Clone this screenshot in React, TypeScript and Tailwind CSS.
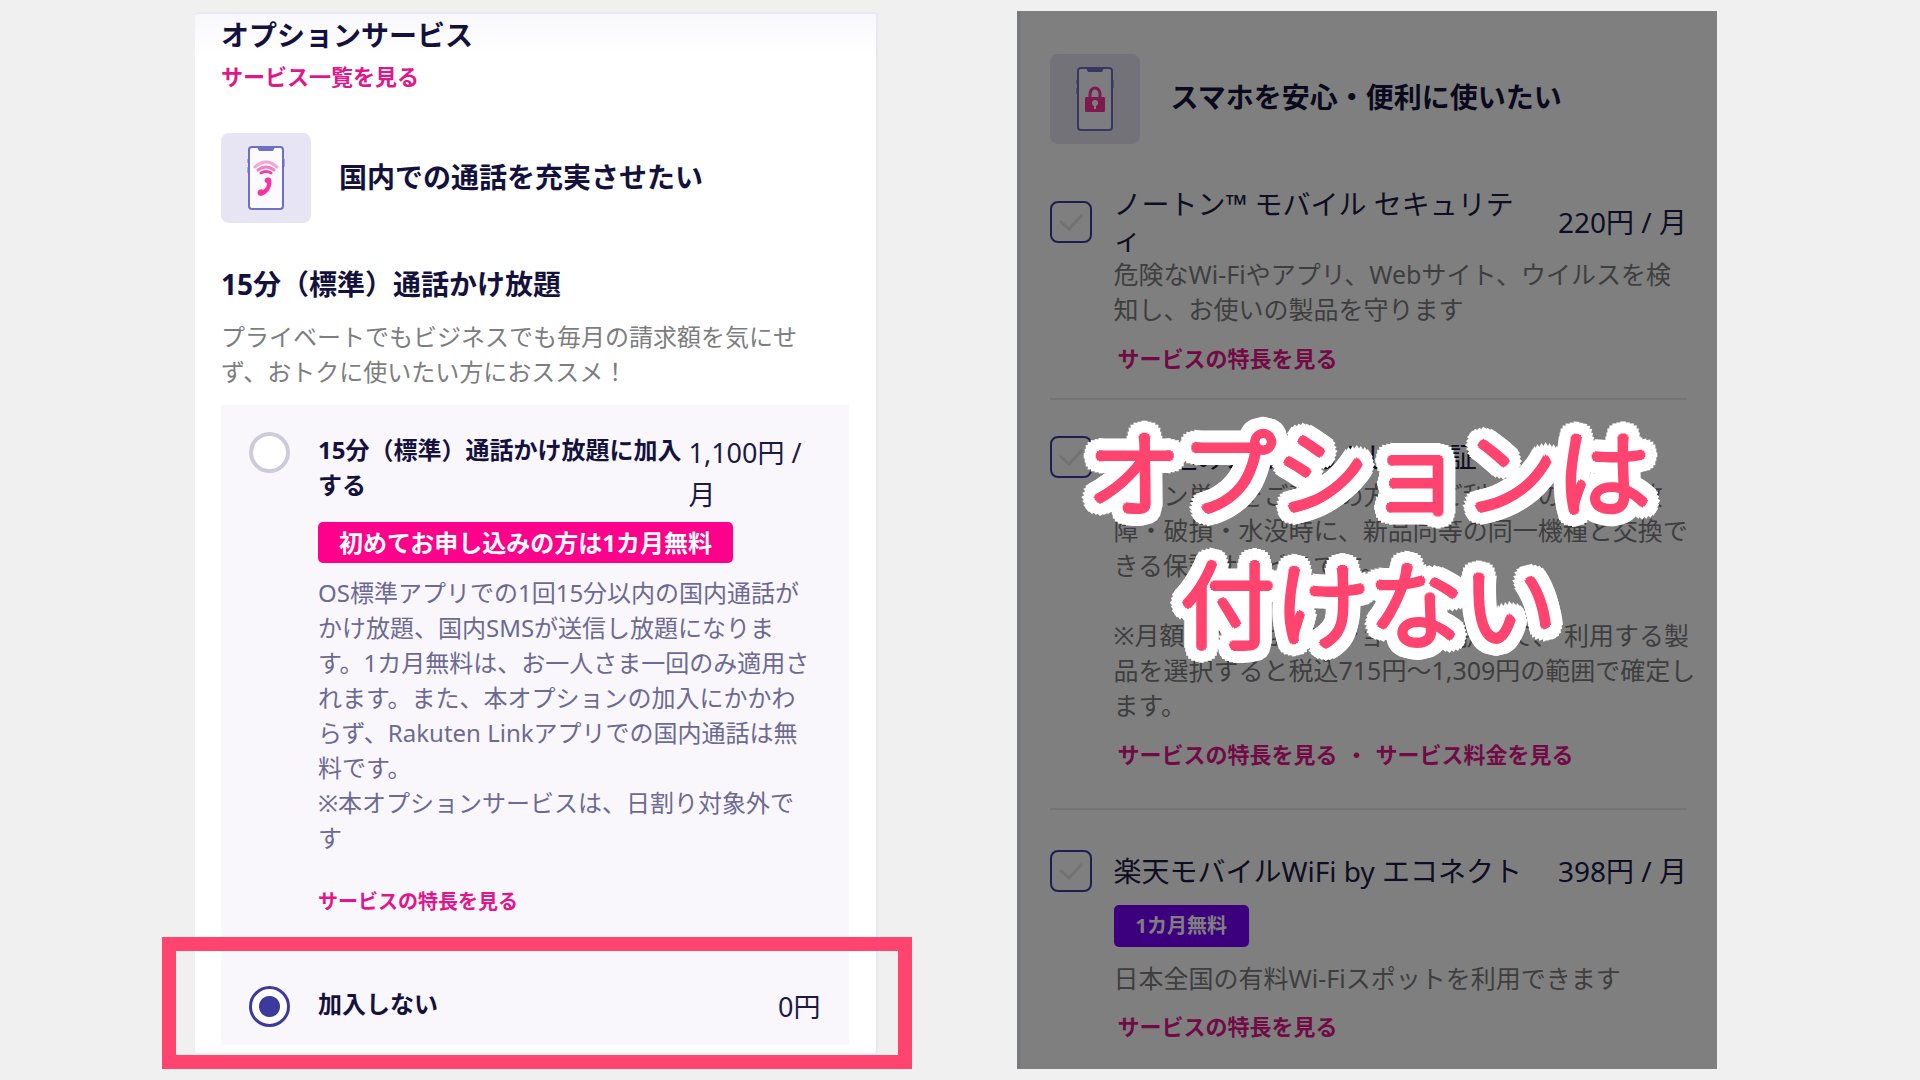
import React from "react";

function PhoneIcon({ type }: { type: "call" | "lock" }) {
  return (
    <div className="flex h-[90px] w-[90px] shrink-0 items-center justify-center rounded-lg bg-[#e7e5f3]">
      <svg width="40" height="66" viewBox="0 0 40 66" fill="none">
        <rect x="3" y="2" width="34" height="62" rx="3" fill="#fbfaff" stroke="#6f6fc4" strokeWidth="2" />
        <path d="M11 2h18l-2 4H13z" fill="#6f6fc4" />
        <path d="M2 14v4M2 22v6M38 14v8" stroke="#6f6fc4" strokeWidth="1" />
        {type === "call" ? (
          <g>
            <g strokeLinecap="round" strokeWidth="3">
              <path d="M9 22q11-10 22 0" stroke="#f9a3d5" />
              <path d="M12 25q8-6 16 0" stroke="#f77cc2" />
              <path d="M15 28q5-3 10 0" stroke="#f23fa6" />
            </g>
            <path
              d="M19 34c1-2 5-2 6 0 2 8-3 15-10 17-3 0-5-4-2-6 2-1 3-1 4 0 3-2 4-4 4-7-2 0-3-2-2-4z"
              fill="#f9339f"
            />
          </g>
        ) : (
          <g>
            <path d="M15 32v-4a5 6 0 0 1 10 0v4" stroke="#f9339f" strokeWidth="3" />
            <rect x="10" y="31" width="20" height="15" rx="1" fill="#f9339f" />
            <circle cx="20" cy="37" r="3" fill="#fbfaff" />
            <path d="M20 38v5" stroke="#fbfaff" strokeWidth="2" />
          </g>
        )}
      </svg>
    </div>
  );
}

function TextLink({ children, small }: { children: React.ReactNode; small?: boolean }) {
  return (
    <a
      href="#"
      className={small ? "text-[20px] leading-[34px] font-bold text-[#e3158b]" : "text-[22px] leading-[34px] font-bold text-[#e3158b]"}
    >
      {children}
    </a>
  );
}

function OptionCheckbox({ id }: { id: string }) {
  return (
    <span className="grid h-[42px] w-[42px] shrink-0">
      <input
        id={id}
        type="checkbox"
        className="col-start-1 row-start-1 h-[42px] w-[42px] appearance-none rounded-lg border-2 border-[#3d3a9e] bg-white"
      />
      <svg
        className="pointer-events-none col-start-1 row-start-1 place-self-center"
        width="24"
        height="18"
        viewBox="0 0 24 18"
        fill="none"
        stroke="#e4e4e8"
        strokeWidth="3"
      >
        <path d="M1 8l9 8L23 2" />
      </svg>
    </span>
  );
}

function OptionRow({ id, title, price }: { id: string; title: string; price?: string }) {
  return (
    <div className="flex items-center gap-[22px]">
      <OptionCheckbox id={id} />
      <div className="flex flex-1 items-center justify-between gap-7">
        <label htmlFor={id} className="text-[28px] leading-[35px] text-[#1c1a45]">
          {title}
        </label>
        {price && <span className="shrink-0 text-[28px] leading-[35px] text-[#1c1a45]">{price}</span>}
      </div>
    </div>
  );
}

function CallOptions() {
  return (
    <section className="mt-px flex-[627] rounded-sm border-t-2 border-r-2 border-[#e9e7f1] bg-linear-to-b from-[#f8f7fb] to-white to-4% pr-[27px] pb-2 pl-[26px]">
      <h1 className="pt-px text-[28px] leading-10 font-bold text-[#14123d]">オプションサービス</h1>
      <div className="mt-1 flex">
        <TextLink>サービス一覧を見る</TextLink>
      </div>

      <div className="mt-10 flex items-center gap-7">
        <PhoneIcon type="call" />
        <h2 className="pb-0.5 text-[28px] leading-10 font-bold text-[#14123d]">国内での通話を充実させたい</h2>
      </div>

      <h3 className="mt-[41px] text-[28px] leading-10 font-bold text-[#14123d]">15分（標準）通話かけ放題</h3>
      <p className="mt-[15px] pr-6 text-[24px] leading-[35px] text-[#7d7d80]">
        プライベートでもビジネスでも毎月の請求額を気にせず、おトクに使いたい方におススメ！
      </p>

      <div className="mt-4 bg-[#f9f7fc] px-7">
        <div className="flex gap-7 pt-[27px]">
          <input
            id="call-join"
            type="radio"
            name="call"
            className="h-[41px] w-[41px] shrink-0 appearance-none rounded-full border-4 border-[#cdcbd9] bg-white"
          />
          <div className="flex-1">
            <div className="flex">
              <label htmlFor="call-join" className="flex-1 text-[24px] leading-[35px] font-bold text-[#14123d]">
                15分（標準）通話かけ放題に加入する
              </label>
              <span className="w-[132px] shrink-0 text-[27px] leading-[42px] text-[#1c1a45]">1,100円 / 月</span>
            </div>
            <div className="mt-1.5 flex">
              <span className="rounded-[5px] bg-[#ff008c] px-[21px] text-[24px] leading-[41px] font-bold text-white">
                初めてお申し込みの方は1カ月無料
              </span>
            </div>
            <p className="mt-3 pr-2 text-[24px] leading-[35px] text-[#6c6a92]">
              OS標準アプリでの1回15分以内の国内通話がかけ放題、国内SMSが送信し放題になります。1カ月無料は、お一人さま一回のみ適用されます。また、本オプションの加入にかかわらず、Rakuten
              Linkアプリでの国内通話は無料です。
              <br />
              ※本オプションサービスは、日割り対象外です
            </p>
            <div className="mt-[30px] flex">
              <TextLink small>サービスの特長を見る</TextLink>
            </div>
          </div>
        </div>

        {/* selected option with the highlight frame */}
        <div className="relative mt-[18px] flex gap-7 pt-[49px] pb-[17px]">
          <input
            id="call-none"
            type="radio"
            name="call"
            defaultChecked
            className="h-[41px] w-[41px] shrink-0 appearance-none rounded-full border-[3px] border-[#3d3a9e] bg-white bg-radial from-[#3d3a9e] from-[10px] to-white to-[11px]"
          />
          <label htmlFor="call-none" className="flex-1 text-[24px] leading-[35px] font-bold text-[#14123d]">
            加入しない
          </label>
          <span className="text-[27px] leading-[42px] text-[#1c1a45]">0円</span>
          <div className="pointer-events-none absolute top-0 -right-[91px] -bottom-6 -left-[87px] border-14 border-[#ff456f]" />
        </div>
      </div>
    </section>
  );
}

function SecurityOptions() {
  return (
    <section className="relative flex-[637] border-l-4 border-[#f1f2fb] bg-white pt-[43px] pr-[30px] pb-[26px] pl-[29px]">
      <div className="flex items-center gap-[31px]">
        <PhoneIcon type="lock" />
        <h2 className="pb-1 text-[28px] leading-10 font-bold text-[#14123d]">スマホを安心・便利に使いたい</h2>
      </div>

      <div className="mt-[43px] border-b-2 border-[#e9e9ec] pb-[23px]">
        <OptionRow id="norton" title="ノートン™ モバイル セキュリティ" price="220円 / 月" />
        <div className="pl-16">
          <p className="text-[25px] leading-[35px] text-[#7d7d80]">
            危険なWi-Fiやアプリ、Webサイト、ウイルスを検知し、お使いの製品を守ります
          </p>
          <div className="mt-[14px] flex pl-1">
            <TextLink>サービスの特長を見る</TextLink>
          </div>
        </div>
      </div>

      <div className="border-b-2 border-[#e9e9ec] pt-9 pb-[37px]">
        <OptionRow id="warranty" title="持ち込みスマホあんしん保証" />
        <div className="pl-16">
          <p className="-mr-5 text-[25px] leading-[35px] text-[#7d7d80]">
            プラン単体をご契約の方も、ご利用中の製品が故
            <br />
            障・破損・水没時に、新品同等の同一機種と交換できる保証サービスです。
            <br />
            <br />
            ※月額利用料はオプションを選択して、 利用する製品を選択すると税込715円～1,309円の範囲で確定します。
          </p>
          <div className="mt-[14px] flex gap-2 pl-1 text-[22px] leading-[34px] font-bold text-[#e3158b]">
            <TextLink>サービスの特長を見る</TextLink>
            <span>・</span>
            <TextLink>サービス料金を見る</TextLink>
          </div>
        </div>
      </div>

      <div className="pt-10">
        <OptionRow id="wifi" title="楽天モバイルWiFi by エコネクト" price="398円 / 月" />
        <div className="pl-16">
          <div className="mt-[13px] flex">
            <span className="rounded-[5px] bg-[#7800ff] px-[22px] text-[20px] leading-[42px] font-bold text-white">
              1カ月無料
            </span>
          </div>
          <p className="mt-[14px] text-[25px] leading-[35px] text-[#7d7d80]">
            日本全国の有料Wi-Fiスポットを利用できます
          </p>
          <div className="mt-[13px] flex pl-1">
            <TextLink>サービスの特長を見る</TextLink>
          </div>
        </div>
      </div>

      {/* dimmed layer and caption */}
      <div className="pointer-events-none absolute inset-y-0 right-0 -left-1 bg-black/50" />
      <p className="pointer-events-none absolute inset-x-0 top-[396px] text-center text-[94px] leading-[132px] font-light text-[#ff456f] [text-shadow:3px_0_#ff456f,2px_2px_#ff456f,0_3px_#ff456f,-2px_2px_#ff456f,-3px_0_#ff456f,-2px_-2px_#ff456f,0_-3px_#ff456f,2px_-2px_#ff456f,15px_0_white,14px_4px_white,13px_8px_white,11px_11px_white,8px_13px_white,4px_14px_white,0_15px_white,-4px_14px_white,-8px_13px_white,-11px_11px_white,-13px_8px_white,-14px_4px_white,-15px_0_white,-14px_-4px_white,-13px_-8px_white,-11px_-11px_white,-8px_-13px_white,-4px_-14px_white,0_-15px_white,4px_-14px_white,8px_-13px_white,11px_-11px_white,13px_-8px_white,14px_-4px_white,9px_0_white,6px_6px_white,0_9px_white,-6px_6px_white,-9px_0_white,-6px_-6px_white,0_-9px_white,6px_-6px_white]">
        オプションは
        <br />
        付けない
      </p>
    </section>
  );
}

export default function App() {
  return (
    <main
      lang="ja"
      className="flex min-h-screen items-start gap-[139px] bg-[#f0f0f0] pt-[11px] pr-[203px] pb-[10px] pl-[195px] font-['Noto_Sans','Noto_Sans_CJK_JP',sans-serif]"
    >
      <CallOptions />
      <SecurityOptions />
    </main>
  );
}
